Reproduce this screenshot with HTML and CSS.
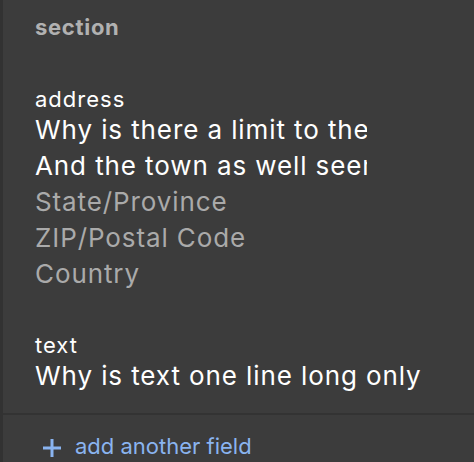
FILE: index.html
```html
<!DOCTYPE html>
<html>
<head>
<meta charset="utf-8">
<link rel="stylesheet" href="styles.css">
</head>
<body>
<div class="panel">
  <div class="content">
    <div class="section-title">section</div>
    <div class="field field-address">
      <div class="label">address</div>
      <div class="value">Why is there a limit to the length of a street address</div>
      <div class="value">And the town as well seems limited</div>
      <div class="value placeholder">State/Province</div>
      <div class="value placeholder">ZIP/Postal Code</div>
      <div class="value placeholder">Country</div>
    </div>
    <div class="field field-text">
      <div class="label">text</div>
      <div class="value value-wide">Why is text one line long only</div>
    </div>
  </div>
  <div class="footer">
    <svg class="plus" width="20" height="20" viewBox="0 0 20 20"><path d="M10 1v18M1 10h18" stroke="#8ab4f0" stroke-width="3" fill="none"/></svg>
    <span class="add">add another field</span>
  </div>
</div>
</body>
</html>
```
FILE: styles.css
```css
html, body {
  margin: 0;
  padding: 0;
  background: #3c3c3c;
  height: 100%;
}
body {
  font-family: Inter, "Noto Sans", sans-serif;
  -webkit-font-smoothing: antialiased;
}
.panel {
  border-left: 3px solid #323232;
  min-height: 100%;
  box-sizing: border-box;
  display: flex;
  flex-direction: column;
}
.content {
  padding: 13px 0 19px 32px;
  border-bottom: 2px solid #333333;
}
.section-title {
  font-size: 22px;
  font-weight: 700;
  color: #b1b1b1;
  line-height: 28px;
  letter-spacing: 0.7px;
}
.field {
  margin-top: 45px;
}
.field-text {
  margin-top: 40px;
}
.label {
  font-size: 22px;
  color: #ffffff;
  line-height: 26px;
  letter-spacing: 1px;
}
.value {
  font-size: 26px;
  line-height: 36px;
  color: #ffffff;
  width: 332px;
  white-space: nowrap;
  overflow: hidden;
  letter-spacing: 0.9px;
}
.value-wide {
  width: auto;
}
.placeholder {
  color: #aaaaaa;
}
.footer {
  display: flex;
  align-items: center;
  gap: 13px;
  padding: 18px 0 0 39px;
}
.plus {
  margin-top: 4px;
}
.add {
  font-size: 22px;
  line-height: 26px;
  color: #8ab4f0;
}
```
